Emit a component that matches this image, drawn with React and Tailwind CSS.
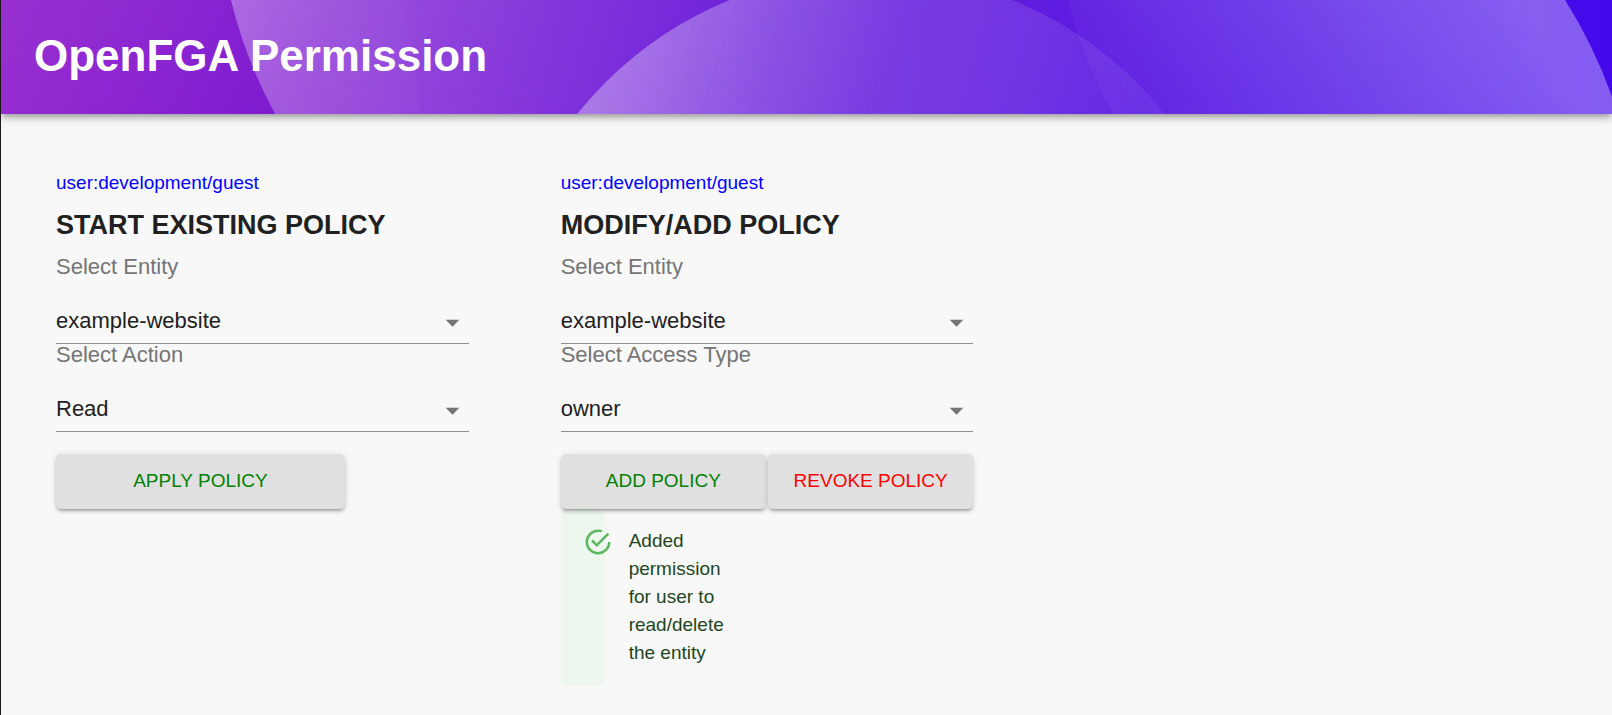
import { useId } from "react";

function HeaderShapes() {
  return (
    <svg
      className="absolute inset-0 h-full w-full"
      viewBox="0 0 1611 114"
      preserveAspectRatio="none"
      aria-hidden="true"
    >
      <defs>
        <linearGradient id="far-left" gradientUnits="userSpaceOnUse" x1="0" y1="0" x2="250" y2="140">
          <stop offset="0" stopColor="#fff" stopOpacity="0.13" />
          <stop offset="1" stopColor="#fff" stopOpacity="0.02" />
        </linearGradient>
        <linearGradient id="left" gradientUnits="userSpaceOnUse" x1="230" y1="0" x2="740" y2="160">
          <stop offset="0" stopColor="#fff" stopOpacity="0.32" />
          <stop offset="0.4" stopColor="#fff" stopOpacity="0.18" />
          <stop offset="0.85" stopColor="#fff" stopOpacity="0.06" />
          <stop offset="1" stopColor="#fff" stopOpacity="0.03" />
        </linearGradient>
        <linearGradient id="middle" gradientUnits="userSpaceOnUse" x1="590" y1="60" x2="1180" y2="244">
          <stop offset="0" stopColor="#fff" stopOpacity="0.36" />
          <stop offset="0.46" stopColor="#fff" stopOpacity="0.13" />
          <stop offset="0.7" stopColor="#fff" stopOpacity="0.1" />
          <stop offset="1" stopColor="#fff" stopOpacity="0.03" />
        </linearGradient>
        <linearGradient id="right" gradientUnits="userSpaceOnUse" x1="1150" y1="150" x2="1500" y2="-40">
          <stop offset="0" stopColor="#fff" stopOpacity="0.04" />
          <stop offset="1" stopColor="#fff" stopOpacity="0.34" />
        </linearGradient>
      </defs>
      <path d="M0 0H399Q413 50 420 114H0Z" fill="url(#far-left)" />
      <path d="M230 0H1611V114H274Q244 58 230 0Z" fill="url(#left)" />
      <circle cx="870" cy="348" r="375.6" fill="url(#middle)" />
      <path d="M1067 0H1564Q1596 50 1617 114H1112Q1082 60 1067 0Z" fill="url(#right)" />
    </svg>
  );
}

function SelectField({ label, options }) {
  const id = useId();
  return (
    <div className="flex flex-col gap-[22px]">
      <label htmlFor={id} className="text-[22px] leading-[22px] text-[#757575]">
        {label}
      </label>
      <div className="relative">
        <select
          id={id}
          className="block h-11 w-full appearance-none border-b border-[#8f8f8f] bg-transparent pb-0.5 pr-9 text-[22px] text-[#212121] outline-none"
        >
          {options.map((option) => (
            <option key={option}>{option}</option>
          ))}
        </select>
        <svg
          viewBox="0 0 24 24"
          className="pointer-events-none absolute right-0 top-1.5 size-[33px] fill-[#757575]"
          aria-hidden="true"
        >
          <path d="M7 10l5 5 5-5z" />
        </svg>
      </div>
    </div>
  );
}

function PolicyButton({ className, children }) {
  return (
    <button
      type="button"
      className={`h-[55px] rounded-[5px] bg-[#e0e0e0] text-[19px] uppercase shadow-[0_4px_2px_-3px_rgba(0,0,0,0.2),0_3px_3px_0_rgba(0,0,0,0.14),0_1px_7px_0_rgba(0,0,0,0.12)] ${className}`}
    >
      {children}
    </button>
  );
}

function PolicySection({ title, children }) {
  return (
    <section className="pr-[92px]">
      <p className="text-[19px] leading-7 text-[#0000ff]">user:development/guest</p>
      <h2 className="mb-3.5 mt-[11px] text-[27px] font-bold uppercase leading-[34px] text-[#212121]">{title}</h2>
      {children}
    </section>
  );
}

function SuccessAlert({ children }) {
  return (
    <div role="alert" className="flex w-11 gap-4 rounded-[5px] bg-[#edf7ed] px-[22px] py-[18px]">
      <svg viewBox="0 0 24 24" className="size-[30px] shrink-0 fill-[#5cb860]" aria-hidden="true">
        <path d="M20,12A8,8 0 0,1 12,20A8,8 0 0,1 4,12A8,8 0 0,1 12,4C12.76,4 13.5,4.11 14.2,4.31L15.77,2.74C14.61,2.26 13.34,2 12,2A10,10 0 0,0 2,12A10,10 0 0,0 12,22A10,10 0 0,0 22,12M7.91,10.08L6.5,11.5L11,16L21,6L19.59,4.58L11,13.17L7.91,10.08Z" />
      </svg>
      <p className="w-[100px] shrink-0 text-[19px] leading-7 text-[#1e4620]">{children}</p>
    </div>
  );
}

export default function App() {
  return (
    <div className="min-h-screen overflow-hidden border-l border-[#1a1a1a] bg-[#f8f8f8] font-['Liberation_Sans',Arial,sans-serif]">
      <header className="relative bg-linear-to-r from-[#8912ca] to-[#3e00ea] px-[33px] pb-[34px] pt-8 shadow-[0_3px_5px_-1px_rgba(0,0,0,0.2),0_5px_7px_0_rgba(0,0,0,0.14),0_1px_14px_0_rgba(0,0,0,0.12)]">
        <HeaderShapes />
        <h1 className="relative text-[44px] font-bold leading-[48px] text-white">OpenFGA Permission</h1>
      </header>
      <main className="grid grid-cols-3 pb-7 pl-[55px] pr-[42px] pt-[55px]">
        <PolicySection title="Start existing policy">
          <SelectField label="Select Entity" options={["example-website"]} />
          <SelectField label="Select Action" options={["Read", "Delete"]} />
          <PolicyButton className="mt-[22px] w-[70%] text-[#008000]">Apply policy</PolicyButton>
        </PolicySection>
        <PolicySection title="Modify/add policy">
          <SelectField label="Select Entity" options={["example-website"]} />
          <SelectField label="Select Access Type" options={["owner", "viewer"]} />
          <div className="mt-[22px] grid grid-cols-2 gap-0.5">
            <PolicyButton className="text-[#008000]">Add policy</PolicyButton>
            <PolicyButton className="text-[#ff0000]">Revoke policy</PolicyButton>
          </div>
          <SuccessAlert>Added permission for user to read/delete the entity</SuccessAlert>
        </PolicySection>
      </main>
    </div>
  );
}
